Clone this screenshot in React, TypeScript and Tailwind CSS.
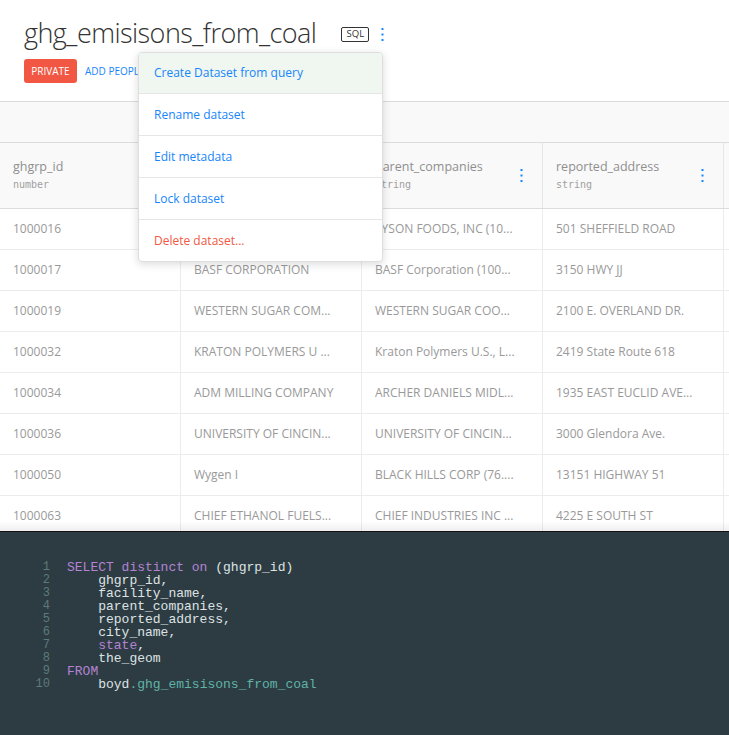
import React from "react";

const rows = [
  ["1000016", "TYSON FOODS INC", "TYSON FOODS, INC (10...", "501 SHEFFIELD ROAD"],
  ["1000017", "BASF CORPORATION", "BASF Corporation (100...", "3150 HWY JJ"],
  ["1000019", "WESTERN SUGAR COM...", "WESTERN SUGAR COO...", "2100 E. OVERLAND DR."],
  ["1000032", "KRATON POLYMERS U ...", "Kraton Polymers U.S., L...", "2419 State Route 618"],
  ["1000034", "ADM MILLING COMPANY", "ARCHER DANIELS MIDL...", "1935 EAST EUCLID AVE..."],
  ["1000036", "UNIVERSITY OF CINCIN...", "UNIVERSITY OF CINCIN...", "3000 Glendora Ave."],
  ["1000050", "Wygen I", "BLACK HILLS CORP (76....", "13151 HIGHWAY 51"],
  ["1000063", "CHIEF ETHANOL FUELS...", "CHIEF INDUSTRIES INC ...", "4225 E SOUTH ST"],
];

const cols = [
  { name: "ghgrp_id", type: "number", dots: false },
  { name: "facility_name", type: "string", dots: true },
  { name: "parent_companies", type: "string", dots: true },
  { name: "reported_address", type: "string", dots: true },
];

function Dots({ className = "" }: { className?: string }) {
  return (
    <svg width="3" height="13" viewBox="0 0 3 13" className={className}>
      <rect x="0.5" y="0" width="2" height="2" fill="#1785fb" />
      <rect x="0.5" y="5.5" width="2" height="2" fill="#1785fb" />
      <rect x="0.5" y="11" width="2" height="2" fill="#1785fb" />
    </svg>
  );
}

type Tok = { t: string; c?: string };
const P = "#b483d4";
const W = "#dfe3e3";
const T = "#5fb3a6";
const code: Tok[][] = [
  [{ t: "SELECT distinct on", c: P }, { t: " (ghgrp_id)", c: W }],
  [{ t: "    ghgrp_id,", c: W }],
  [{ t: "    facility_name,", c: W }],
  [{ t: "    parent_companies,", c: W }],
  [{ t: "    reported_address,", c: W }],
  [{ t: "    city_name,", c: W }],
  [{ t: "    ", c: W }, { t: "state", c: P }, { t: ",", c: W }],
  [{ t: "    the_geom", c: W }],
  [{ t: "FROM", c: P }],
  [{ t: "    boyd", c: W }, { t: ".ghg_emisisons_from_coal", c: T }],
];

export default function App() {
  return (
    <div
      className="relative w-[729px] h-[735px] overflow-hidden bg-white flex flex-col"
      style={{ fontFamily: "'Open Sans', sans-serif" }}
    >
      {/* Header */}
      <div className="h-[102px] border-b border-[#dcdcdc] pl-[24px] pt-[15px] shrink-0">
        <div className="flex items-center">
          <h1 className="text-[27px] leading-[36px] font-light text-[#333] tracking-[-0.55px]">
            ghg_emisisons_from_coal
          </h1>
          <span className="ml-[25px] mt-[2px] border border-[#333] rounded-[2px] w-[28px] h-[15px] flex items-center justify-center text-[9.5px] leading-none text-[#333]">
            SQL
          </span>
          <Dots className="ml-[12px] mt-[2px]" />
        </div>
        <div className="flex items-center mt-[8px]">
          <span className="bg-[#f15743] text-white text-[10px] h-[24px] w-[53px] rounded-[3px] flex items-center justify-center">
            PRIVATE
          </span>
          <span className="ml-[8px] text-[#1785fb] text-[10px]">ADD PEOPLE</span>
        </div>
      </div>

      {/* Toolbar band */}
      <div className="h-[41px] bg-[#f9f9f9] border-b border-[#dcdcdc] shrink-0" />

      {/* Table */}
      <div className="flex-1 overflow-hidden relative">
        <div className="flex h-[66px] bg-[#f9f9f9] border-b border-[#dcdcdc]">
          {cols.map((c) => (
            <div
              key={c.name}
              className="w-[181px] shrink-0 border-r border-[#e6e6e6] pl-[13px] pr-[19px] flex items-center justify-between"
            >
              <div className="flex flex-col">
                <span className="text-[12.5px] leading-[16px] text-[#8f8f8f]">{c.name}</span>
                <span
                  className="text-[10px] leading-[14px] mt-[3px] text-[#a0a0a0]"
                  style={{ fontFamily: "'DejaVu Sans Mono', monospace" }}
                >
                  {c.type}
                </span>
              </div>
              {c.dots && <Dots />}
            </div>
          ))}
          <div className="flex-1" />
        </div>
        {rows.map((r, i) => (
          <div key={i} className="flex h-[41px] border-b border-[#ececec]">
            {r.map((v, j) => (
              <div
                key={j}
                className="w-[181px] shrink-0 border-r border-[#ececec] pl-[13px] pr-[10px] flex items-center text-[12px] text-[#999] whitespace-nowrap overflow-hidden"
              >
                {v}
              </div>
            ))}
            <div className="flex-1" />
          </div>
        ))}
        <div className="absolute left-0 right-0 bottom-0 h-[10px] bg-gradient-to-b from-transparent to-[#00000010]" />
      </div>

      {/* SQL panel */}
      <div className="h-[204px] shrink-0 bg-[#2d3c43] border-t border-[#111] pt-[29px]">
        {code.map((line, i) => (
          <div
            key={i}
            className="flex h-[13px] text-[13px] leading-[13px]"
            style={{ fontFamily: "'Liberation Mono', monospace" }}
          >
            <span className="w-[50px] text-right text-[#5e7a78] text-[12px]">{i + 1}</span>
            <span className="ml-[17px] whitespace-pre">
              {line.map((tok, k) => (
                <span key={k} style={{ color: tok.c }}>
                  {tok.t}
                </span>
              ))}
            </span>
          </div>
        ))}
      </div>

      {/* Dropdown menu */}
      <div className="absolute left-[138px] top-[52px] w-[245px] bg-white border border-[#dedede] rounded-[4px] shadow-[0_2px_8px_rgba(0,0,0,0.15)] overflow-hidden text-[12px]">
        <div className="h-[41px] bg-[#eff7f0] border-b border-[#e6e6e6] flex items-center pl-[15px] text-[#1785fb]">
          Create Dataset from query
        </div>
        <div className="h-[42px] border-b border-[#e6e6e6] flex items-center pl-[15px] text-[#1785fb]">
          Rename dataset
        </div>
        <div className="h-[42px] border-b border-[#e6e6e6] flex items-center pl-[15px] text-[#1785fb]">
          Edit metadata
        </div>
        <div className="h-[42px] border-b border-[#e6e6e6] flex items-center pl-[15px] text-[#1785fb]">
          Lock dataset
        </div>
        <div className="h-[41px] flex items-center pl-[15px] text-[#f15743]">Delete dataset...</div>
      </div>
    </div>
  );
}
